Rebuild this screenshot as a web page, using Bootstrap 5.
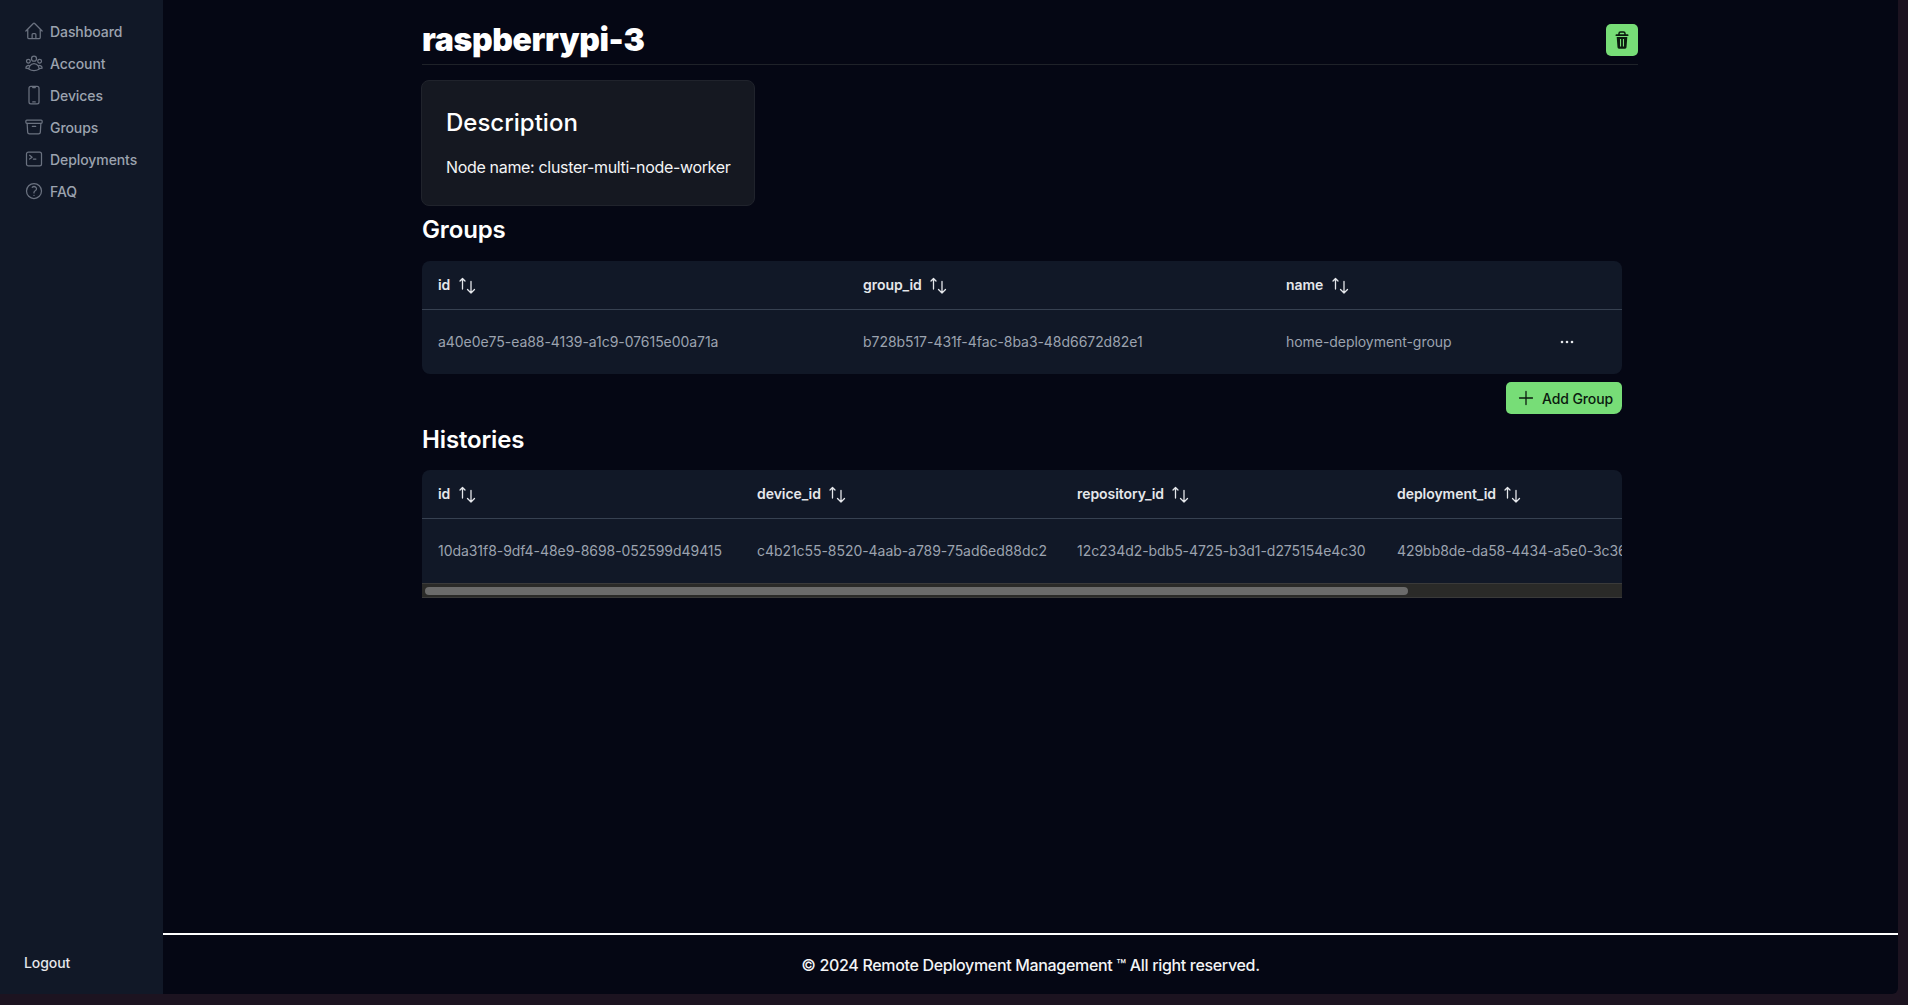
<!DOCTYPE html>
<html lang="en">
<head>
    <meta charset="UTF-8">
    <meta name="viewport" content="width=device-width, initial-scale=1.0">
    <title>raspberrypi-3</title>
    <link href="https://cdn.jsdelivr.net/npm/bootstrap@5.3.0/dist/css/bootstrap.min.css" rel="stylesheet">
    <style>
        html, body { height: 100%; }
        body { background: #1c1320; font-family: Inter, "Liberation Sans", sans-serif; color: #fff; overflow: hidden; }
        .app-shell { width: 1898px; height: 994px; background: #050714; border-bottom-right-radius: 6px; overflow: hidden; }
        .side-bar { width: 163px; background: #111827; padding: 15px 0 16px 24px; flex-shrink: 0; }
        .side-link { height: 32px; color: #9ca3af; font-size: 14px; font-weight: 500; text-decoration: none; gap: 6px; letter-spacing: -0.08px; }
        .side-link svg { width: 20px; height: 20px; flex-shrink: 0; margin-top: -1px; }
        .logout-link { color: #e5e7eb; font-size: 14px; font-weight: 500; text-decoration: none; line-height: 20px; margin-bottom: 5px; letter-spacing: -0.08px; }
        .page-wrap { width: 1216px; margin-left: 259px; padding-top: 20px; }
        .title-row { height: 45px; border-bottom: 1px solid #1f2229; }
        .page-title { font-size: 32px; font-weight: 900; line-height: 40px; margin: -5px 0 0; letter-spacing: -0.35px; }
        .trash-btn { width: 32px; height: 32px; background: #77dd77; border: 0; border-radius: 5px; padding: 0; margin-top: -5px; }
        .trash-btn svg { width: 14px; height: 18px; }
        .desc-box { width: 334px; height: 126px; margin: 15px 0 0 -1px; background: #151821; border: 1px solid #20232c; border-radius: 8px; padding: 26px 24px; }
        .desc-box h5 { font-size: 24px; font-weight: 500; line-height: 32px; margin: 0 0 16px; }
        .desc-box p { font-size: 16px; line-height: 24px; margin: 0; color: #f3f4f6; letter-spacing: -0.33px; white-space: nowrap; }
        .block-title { font-size: 24px; font-weight: 600; line-height: 32px; margin: 0; letter-spacing: -0.15px; }
        .title-groups { margin: 8px 0 15px; }
        .title-histories { margin: 10px 0 14px; }
        .tbl-box { width: 1200px; background: #111827; border-radius: 8px; overflow: hidden; }
        .tbl-clip { width: 1200px; overflow: hidden; }
        .tbl-open { border-radius: 8px 8px 0 0; }
        .fake-track { height: 15px; background: #2a2a28; border-top: 1px solid #3a3a3a; border-bottom: 1px solid #3a3a3a; padding: 3px 0 0 3px; }
        .fake-thumb { height: 8px; background: #6b6b6b; border-radius: 4px; }
        .data-tbl { margin: 0; border-collapse: collapse; --bs-table-bg: transparent; table-layout: fixed; font-size: 14px; }
        .data-tbl th { color: #e5e7eb; font-weight: 600; height: 48px; padding: 0 16px; border-bottom: 1px solid #374151; white-space: nowrap; font-size: 14px; vertical-align: middle; letter-spacing: -0.05px; }
        .data-tbl td { color: #9ca3af; font-weight: 400; height: 65px; padding: 0 16px; border: 0; white-space: nowrap; vertical-align: middle; letter-spacing: -0.05px; }
        .sort-mark { width: 18px; height: 18px; margin-left: 5px; vertical-align: middle; }
        .dots-mark { width: 14px; height: 4px; display: block; margin: 1px 0 0 2px; }
        .add-btn { width: 116px; height: 32px; background: #77dd77; border: 0; border-radius: 5px; color: #0b1a0f; font-size: 14px; font-weight: 500; padding: 0 0 0 11px; gap: 7px; margin-top: 8px; white-space: nowrap; letter-spacing: -0.1px; }
        .add-btn svg { width: 18px; height: 18px; flex-shrink: 0; }
        .foot-rule { height: 2px; background: #fff; }
        .foot-text { height: 59px; font-size: 16px; font-weight: 500; color: #f3f4f6; letter-spacing: -0.33px; }
    </style>
</head>
<body>
    <div class="app-shell d-flex">
        <aside class="side-bar d-flex flex-column justify-content-between">
            <nav class="d-flex flex-column">
                <a class="side-link d-flex align-items-center" href="#">
                    <svg viewBox="0 0 24 24" fill="none" stroke="#6b7280" stroke-width="1.5" stroke-linecap="round" stroke-linejoin="round"><path d="m2.25 12 8.954-8.955c.44-.439 1.152-.439 1.591 0L21.75 12M4.5 9.75v10.125c0 .621.504 1.125 1.125 1.125H9.75v-4.875c0-.621.504-1.125 1.125-1.125h2.25c.621 0 1.125.504 1.125 1.125V21h4.125c.621 0 1.125-.504 1.125-1.125V9.75M8.25 21h8.25"/></svg>
                    Dashboard
                </a>
                <a class="side-link d-flex align-items-center" href="#">
                    <svg viewBox="0 0 24 24" fill="none" stroke="#6b7280" stroke-width="1.5" stroke-linecap="round" stroke-linejoin="round"><path d="M18 18.72a9.094 9.094 0 0 0 3.741-.479 3 3 0 0 0-4.682-2.72m.94 3.198.001.031c0 .225-.012.447-.037.666A11.944 11.944 0 0 1 12 21c-2.17 0-4.207-.576-5.963-1.584A6.062 6.062 0 0 1 6 18.719m12 0a5.971 5.971 0 0 0-.941-3.197m0 0A5.995 5.995 0 0 0 12 12.75a5.995 5.995 0 0 0-5.058 2.772m0 0a3 3 0 0 0-4.681 2.72 8.986 8.986 0 0 0 3.74.477m.94-3.197a5.971 5.971 0 0 0-.94 3.197M15 6.75a3 3 0 1 1-6 0 3 3 0 0 1 6 0Zm6 3a2.25 2.25 0 1 1-4.5 0 2.25 2.25 0 0 1 4.5 0Zm-13.5 0a2.25 2.25 0 1 1-4.5 0 2.25 2.25 0 0 1 4.5 0Z"/></svg>
                    Account
                </a>
                <a class="side-link d-flex align-items-center" href="#">
                    <svg viewBox="0 0 24 24" fill="none" stroke="#6b7280" stroke-width="1.5" stroke-linecap="round" stroke-linejoin="round"><path d="M10.5 1.5H8.25A2.25 2.25 0 0 0 6 3.75v16.5a2.25 2.25 0 0 0 2.25 2.25h7.5A2.25 2.25 0 0 0 18 20.25V3.75a2.25 2.25 0 0 0-2.25-2.25H13.5m-3 0V3h3V1.5m-3 0h3m-3 18.75h3"/></svg>
                    Devices
                </a>
                <a class="side-link d-flex align-items-center" href="#">
                    <svg viewBox="0 0 24 24" fill="none" stroke="#6b7280" stroke-width="1.5" stroke-linecap="round" stroke-linejoin="round"><path d="m20.25 7.5-.625 10.632a2.25 2.25 0 0 1-2.247 2.118H6.622a2.25 2.25 0 0 1-2.247-2.118L3.75 7.5M10 11.25h4M3.375 7.5h17.25c.621 0 1.125-.504 1.125-1.125v-1.5c0-.621-.504-1.125-1.125-1.125H3.375c-.621 0-1.125.504-1.125 1.125v1.5c0 .621.504 1.125 1.125 1.125Z"/></svg>
                    Groups
                </a>
                <a class="side-link d-flex align-items-center" href="#">
                    <svg viewBox="0 0 24 24" fill="none" stroke="#6b7280" stroke-width="1.5" stroke-linecap="round" stroke-linejoin="round"><path d="m6.75 7.5 3 2.25-3 2.25m4.5 0h3m-9 8.25h13.5A2.25 2.25 0 0 0 21 18V6a2.25 2.25 0 0 0-2.25-2.25H5.25A2.25 2.25 0 0 0 3 6v12a2.25 2.25 0 0 0 2.25 2.25Z"/></svg>
                    Deployments
                </a>
                <a class="side-link d-flex align-items-center" href="#">
                    <svg viewBox="0 0 24 24" fill="none" stroke="#6b7280" stroke-width="1.5" stroke-linecap="round" stroke-linejoin="round"><path d="M9.879 7.519c1.171-1.025 3.071-1.025 4.242 0 1.172 1.025 1.172 2.687 0 3.712-.203.179-.43.326-.67.442-.745.361-1.45.999-1.45 1.827v.75M21 12a9 9 0 1 1-18 0 9 9 0 0 1 18 0Zm-9 5.25h.008v.008H12v-.008Z"/></svg>
                    FAQ
                </a>
            </nav>
            <a class="logout-link" href="#">Logout</a>
        </aside>

        <div class="flex-grow-1 d-flex flex-column">
            <main class="flex-grow-1">
                <div class="page-wrap">
                    <div class="title-row d-flex justify-content-between align-items-center">
                        <h1 class="page-title">raspberrypi-3</h1>
                        <button class="trash-btn d-flex align-items-center justify-content-center" type="button" aria-label="Delete">
                            <svg viewBox="0 0 14 18" fill="#0b1a0f"><path d="M4 4V2.600A1.600 1.600 0 0 1 5.600 1h2.800A1.600 1.600 0 0 1 10 2.600V4" fill="none" stroke="#0b1a0f" stroke-width="1.500"/><rect x="0.500" y="3.300" width="13" height="1.800" rx="0.900"/><path d="M1.700 6h10.600l-.8 10.300a1.500 1.500 0 0 1-1.500 1.400H4a1.500 1.500 0 0 1-1.500-1.400zM5 8v7.500h1.100V8zM7.900 8v7.500H9V8z" fill-rule="evenodd"/></svg>
                        </button>
                    </div>

                    <div class="desc-box">
                        <h5>Description</h5>
                        <p>Node name: cluster-multi-node-worker</p>
                    </div>

                    <h2 class="block-title title-groups">Groups</h2>
                    <div class="tbl-box">
                        <table class="table data-tbl" style="width: 1200px">
                            <colgroup><col style="width: 425px"><col style="width: 423px"><col style="width: 272px"><col style="width: 80px"></colgroup>
                            <thead>
                                <tr>
                                    <th>id <svg class="sort-mark" viewBox="0 0 18 18" fill="none" stroke="#e5e7eb" stroke-width="1.300" stroke-linecap="round" stroke-linejoin="round"><path d="M3.500 12V1.500M1 4l2.500-2.500L6 4M12 4.500V16M8.500 12.500 12 16l3.500-3.500"/></svg></th>
                                    <th>group_id <svg class="sort-mark" viewBox="0 0 18 18" fill="none" stroke="#e5e7eb" stroke-width="1.300" stroke-linecap="round" stroke-linejoin="round"><path d="M3.500 12V1.500M1 4l2.500-2.500L6 4M12 4.500V16M8.500 12.500 12 16l3.500-3.500"/></svg></th>
                                    <th>name <svg class="sort-mark" viewBox="0 0 18 18" fill="none" stroke="#e5e7eb" stroke-width="1.300" stroke-linecap="round" stroke-linejoin="round"><path d="M3.500 12V1.500M1 4l2.500-2.500L6 4M12 4.500V16M8.500 12.500 12 16l3.500-3.500"/></svg></th>
                                    <th></th>
                                </tr>
                            </thead>
                            <tbody>
                                <tr>
                                    <td>a40e0e75-ea88-4139-a1c9-07615e00a71a</td>
                                    <td>b728b517-431f-4fac-8ba3-48d6672d82e1</td>
                                    <td>home-deployment-group</td>
                                    <td><svg class="dots-mark" viewBox="0 0 14 4" fill="#e5e7eb"><circle cx="2" cy="2" r="1.300"/><circle cx="7" cy="2" r="1.300"/><circle cx="12" cy="2" r="1.300"/></svg></td>
                                </tr>
                            </tbody>
                        </table>
                    </div>
                    <div class="d-flex justify-content-end tbl-box bg-transparent">
                        <button class="add-btn d-flex align-items-center" type="button">
                            <svg viewBox="0 0 18 18" fill="none" stroke="#0b1a0f" stroke-width="1.300" stroke-linecap="round"><path d="M9 2.500v13M2.500 9h13"/></svg>
                            Add Group
                        </button>
                    </div>

                    <h2 class="block-title title-histories">Histories</h2>
                    <div class="tbl-box tbl-open">
                        <div class="tbl-clip">
                            <table class="table data-tbl" style="width: 1460px">
                                <colgroup><col style="width: 319px"><col style="width: 320px"><col style="width: 320px"><col style="width: 320px"><col style="width: 181px"></colgroup>
                                <thead>
                                    <tr>
                                        <th>id <svg class="sort-mark" viewBox="0 0 18 18" fill="none" stroke="#e5e7eb" stroke-width="1.300" stroke-linecap="round" stroke-linejoin="round"><path d="M3.500 12V1.500M1 4l2.500-2.500L6 4M12 4.500V16M8.500 12.500 12 16l3.500-3.500"/></svg></th>
                                        <th>device_id <svg class="sort-mark" viewBox="0 0 18 18" fill="none" stroke="#e5e7eb" stroke-width="1.300" stroke-linecap="round" stroke-linejoin="round"><path d="M3.500 12V1.500M1 4l2.500-2.500L6 4M12 4.500V16M8.500 12.500 12 16l3.500-3.500"/></svg></th>
                                        <th>repository_id <svg class="sort-mark" viewBox="0 0 18 18" fill="none" stroke="#e5e7eb" stroke-width="1.300" stroke-linecap="round" stroke-linejoin="round"><path d="M3.500 12V1.500M1 4l2.500-2.500L6 4M12 4.500V16M8.500 12.500 12 16l3.500-3.500"/></svg></th>
                                        <th>deployment_id <svg class="sort-mark" viewBox="0 0 18 18" fill="none" stroke="#e5e7eb" stroke-width="1.300" stroke-linecap="round" stroke-linejoin="round"><path d="M3.500 12V1.500M1 4l2.500-2.500L6 4M12 4.500V16M8.500 12.500 12 16l3.500-3.500"/></svg></th>
                                        <th></th>
                                    </tr>
                                </thead>
                                <tbody>
                                    <tr>
                                        <td>10da31f8-9df4-48e9-8698-052599d49415</td>
                                        <td>c4b21c55-8520-4aab-a789-75ad6ed88dc2</td>
                                        <td>12c234d2-bdb5-4725-b3d1-d275154e4c30</td>
                                        <td>429bb8de-da58-4434-a5e0-3c36</td>
                                        <td></td>
                                    </tr>
                                </tbody>
                            </table>
                        </div>
                        <div class="fake-track"><div class="fake-thumb" style="width: 983px"></div></div>
                    </div>
                </div>
            </main>
            <footer>
                <div class="foot-rule"></div>
                <div class="foot-text d-flex align-items-center justify-content-center">© 2024 Remote Deployment Management ™ All right reserved.</div>
            </footer>
        </div>
    </div>
</body>
</html>
